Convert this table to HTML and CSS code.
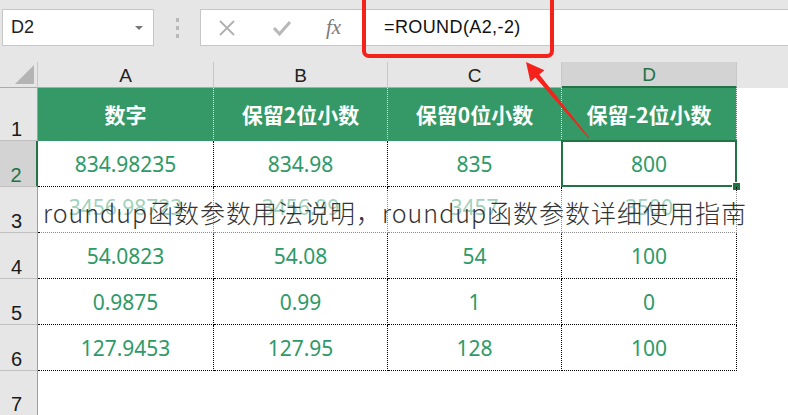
FILE: index.html
```html
<!DOCTYPE html>
<html lang="zh">
<head>
<meta charset="utf-8">
<link rel="stylesheet" href="styles.css">
</head>
<body>
<div class="app">
  <div class="topbar">
    <div class="namebox">
      <span class="name">D2</span>
      <span class="drop"></span>
    </div>
    <div class="grip"><i></i><i></i><i></i></div>
    <div class="formula">
      <div class="ficons">
        <svg class="ico" width="18" height="18" viewBox="0 0 18 18"><path d="M2 2 L16 16 M16 2 L2 16" stroke="#b0b0b0" stroke-width="1.8" fill="none"/></svg>
        <svg class="ico" width="20" height="18" viewBox="0 0 20 18"><path d="M2 9 L7.5 15 L18 3" stroke="#b8b8b8" stroke-width="3" fill="none"/></svg>
        <span class="fx">fx</span>
      </div>
      <div class="ftext">=ROUND(A2,-2)</div>
    </div>
  </div>
  <div class="sheet">
    <div class="corner"><span class="tri"></span></div>
    <div class="ch">A</div>
    <div class="ch">B</div>
    <div class="ch">C</div>
    <div class="ch sel">D</div>
    <div class="ch rest"></div>

    <div class="rh">1</div>
    <div class="c hd">数字</div>
    <div class="c hd">保留2位小数</div>
    <div class="c hd">保留0位小数</div>
    <div class="c hd">保留-2位小数</div>
    <div class="c blank"></div>

    <div class="rh sel">2</div>
    <div class="c">834.98235</div>
    <div class="c">834.98</div>
    <div class="c">835</div>
    <div class="c active">800<span class="handle"></span></div>
    <div class="c blank"></div>

    <div class="rh">3</div>
    <div class="c up">3456.98723</div>
    <div class="c up">3456.99</div>
    <div class="c up">3457</div>
    <div class="c up">3500</div>
    <div class="c blank"></div>

    <div class="rh">4</div>
    <div class="c">54.0823</div>
    <div class="c">54.08</div>
    <div class="c">54</div>
    <div class="c">100</div>
    <div class="c blank"></div>

    <div class="rh">5</div>
    <div class="c">0.9875</div>
    <div class="c">0.99</div>
    <div class="c">1</div>
    <div class="c">0</div>
    <div class="c blank"></div>

    <div class="rh">6</div>
    <div class="c">127.9453</div>
    <div class="c">127.95</div>
    <div class="c">128</div>
    <div class="c">100</div>
    <div class="c blank"></div>

    <div class="rh last">7</div>
    <div class="c blank wide"></div>
  </div>

  <div class="redbox"></div>
  <svg class="arrow" width="788" height="415" viewBox="0 0 788 415">
    <polygon points="526,62 544.4,70.3 539.3,74.4 589.4,137.7 588.6,138.3 535.5,77.6 530.4,81.7" fill="#f5221b"/>
  </svg>
  <div class="caption">roundup函数参数用法说明，roundup函数参数详细使用指南</div>
</div>
</body>
</html>
```
FILE: styles.css
```css
* { box-sizing: border-box; }
html, body { margin: 0; padding: 0; }
body {
  width: 788px;
  height: 415px;
  overflow: hidden;
  background: #e6e6e6;
  font-family: "Noto Sans", "Noto Sans CJK SC", sans-serif;
}
.app {
  position: relative;
  width: 788px;
  height: 415px;
}
.topbar {
  height: 62px;
  display: flex;
  align-items: flex-start;
  padding-top: 9px;
  padding-left: 2px;
}
.namebox {
  width: 152px;
  height: 37px;
  background: #fff;
  border: 1px solid #c6c6c6;
  display: flex;
  align-items: center;
  justify-content: space-between;
  padding: 0 10px 0 8px;
}
.name {
  font-family: "Liberation Sans", sans-serif;
  font-size: 18px;
  color: #222;
}
.drop {
  width: 0; height: 0;
  border-left: 4px solid transparent;
  border-right: 4px solid transparent;
  border-top: 4px solid #777;
}
.grip {
  width: 46px;
  height: 37px;
  display: flex;
  flex-direction: column;
  align-items: center;
  justify-content: center;
  gap: 4px;
}
.grip i {
  display: block;
  width: 3px;
  height: 4px;
  background: #b8b8b8;
}
.formula {
  flex: 1;
  height: 37px;
  background: #fff;
  border: 1px solid #c6c6c6;
  border-right: none;
  display: flex;
  align-items: center;
}
.ficons {
  width: 162px;
  display: flex;
  align-items: center;
  padding-left: 17px;
  gap: 36px;
}
.ico { display: block; }
.fx {
  font-family: "Liberation Serif", serif;
  font-style: italic;
  font-size: 21px;
  color: #7a7a7a;
  margin-left: -2px;
  line-height: 1;
}
.ftext {
  padding-left: 21px;
  font-family: "Liberation Sans", sans-serif;
  font-size: 18px;
  color: #111;
  letter-spacing: 0.4px;
}
.sheet {
  display: grid;
  grid-template-columns: 38px 176px 174px 174px 175px 1fr;
  grid-template-rows: 26px 53px 46px 46px 46px 46px 46px 1fr;
  height: 353px;
  background: #fff;
}
.corner {
  background: #e6e6e6;
  border-right: 1px solid #c8c8c8;
  border-bottom: 1px solid #ababab;
  position: relative;
}
.tri {
  position: absolute;
  right: 3px;
  bottom: 3px;
  width: 0; height: 0;
  border-left: 19px solid transparent;
  border-bottom: 19px solid #b4b4b4;
}
.ch {
  background: #e6e6e6;
  border-right: 1px solid #c8c8c8;
  border-bottom: 1px solid #ababab;
  display: flex;
  align-items: center;
  justify-content: center;
  font-family: "Liberation Sans", sans-serif;
  font-size: 19px;
  color: #222;
  padding-top: 2px;
}
.ch.sel {
  background: #d3d3d3;
  color: #217346;
  border-bottom: 2px solid #217346;
}
.ch.rest {
  border-right: none;
  border-bottom: none;
}
.rh {
  background: #e6e6e6;
  border-right: 1px solid #9f9f9f;
  border-bottom: 1px solid #c0c0c0;
  display: flex;
  align-items: flex-end;
  justify-content: center;
  font-family: "Liberation Sans", sans-serif;
  font-size: 20px;
  color: #1a1a1a;
  padding-bottom: 1px;
  line-height: 1;
  padding-right: 4px;
}
.rh.sel {
  background: #d3d3d3;
  color: #217346;
  border-right: 2px solid #217346;
}
.rh.last { border-bottom: none; }
.c {
  border-right: 1px dotted #000;
  border-bottom: 1px dotted #000;
  display: flex;
  align-items: center;
  justify-content: center;
  font-size: 21px;
  color: #2e9a68;
  position: relative;
}
.c.up { padding-bottom: 6px; }
.c.hd {
  background: #349967;
  color: #fff;
  font-family: "Noto Sans CJK SC", "Noto Sans", sans-serif;
  font-weight: 700;
  font-size: 21px;
  border-right: 1px dotted #e8e8e8;
  border-bottom: 1px solid #349967;
}
.c.blank {
  border: none;
}
.c.wide {
  grid-column: 2 / 7;
}
.c.active::before {
  content: "";
  position: absolute;
  left: -1px;
  top: -1px;
  right: -1px;
  bottom: -1px;
  border: 2px solid #217346;
}
.handle {
  position: absolute;
  right: -4px;
  bottom: -4px;
  width: 7px;
  height: 7px;
  background: #217346;
  border: 1px solid #fff;
  box-sizing: content-box;
  margin: -1px;
}
.redbox {
  position: absolute;
  left: 362px;
  top: -6px;
  width: 192px;
  height: 64px;
  border: 4px solid #f5221b;
  border-radius: 7px;
}
.arrow {
  position: absolute;
  left: 0;
  top: 0;
}
.caption {
  position: absolute;
  left: 40px;
  top: 191px;
  width: 708px;
  height: 43px;
  display: flex;
  align-items: center;
  background: rgba(255, 255, 255, 0.55);
  font-family: "Noto Sans CJK SC", sans-serif;
  font-weight: 300;
  font-size: 25px;
  letter-spacing: 1px;
  color: #333;
  white-space: nowrap;
  padding-left: 3px;
  padding-bottom: 2px;
}
```
